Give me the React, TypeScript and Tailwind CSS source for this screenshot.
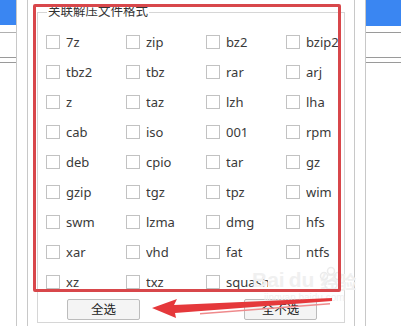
import React from "react";

const items = [
  "7z","zip","bz2","bzip2",
  "tbz2","tbz","rar","arj",
  "z","taz","lzh","lha",
  "cab","iso","001","rpm",
  "deb","cpio","tar","gz",
  "gzip","tgz","tpz","wim",
  "swm","lzma","dmg","hfs",
  "xar","vhd","fat","ntfs",
  "xz","txz","squash",
];

const font = { fontFamily: '"Noto Sans", "Noto Sans CJK SC", sans-serif' };

export default function App() {
  return (
    <div className="relative w-[401px] h-[326px] overflow-hidden bg-white flex" style={font}>
      {/* left strip */}
      <div className="w-[28px] h-full flex border-r border-[#c8c8c8]">
        <div className="w-[17px] h-full border-r border-[#c8c8c8] flex flex-col">
          <div className="h-[25px] bg-[#3a86f2]" />
          <div className="h-[7px]" />
          <div className="h-[25px] border-t border-[#b0b0b0]" />
          <div className="h-[5px] border-t border-[#9a9a9a]" />
          <div className="border-t border-[#9a9a9a]" />
        </div>
      </div>

      {/* main */}
      <div className="w-[326px] h-full pl-[9px] pt-[4px]">
        <fieldset className="w-[308px] h-[319px] border border-[#d6d6d6] flex flex-col">
          <legend className="ml-[9px] px-[1px] text-[12.5px] leading-[16px] text-[#333]" style={font}>
            关联解压文件格式
          </legend>
          <div className="pt-[7px] pl-[8px] grid grid-cols-[80px_80px_80px_58px]">
            {items.map((t) => (
              <div key={t} className="h-[30px] flex items-center">
                <span className="w-[14px] h-[14px] border border-[#c2c2c2] bg-white shrink-0" />
                <span className="ml-[6px] w-[42px] overflow-hidden whitespace-nowrap text-[13px] leading-[16px] text-[#3a3a3a]">
                  {t}
                </span>
              </div>
            ))}
          </div>
          <div className="mt-[2px] pl-[29px] flex gap-[104px]">
            <button className="w-[73px] h-[21px] border border-[#bcbcbc] rounded-[2px] bg-[#f4f4f4] text-[12.5px] leading-[19px] text-[#222]">
              全选
            </button>
            <button className="w-[73px] h-[21px] border border-[#bcbcbc] rounded-[2px] bg-[#f4f4f4] text-[12.5px] leading-[19px] text-[#222]">
              全不选
            </button>
          </div>
        </fieldset>
      </div>

      {/* right strip */}
      <div className="flex-1 h-full flex border-l border-[#c8c8c8]">
        <div className="w-[11px] h-full border-r border-[#c8c8c8]" />
        <div className="flex-1 flex flex-col">
          <div className="h-[26px] bg-[#3a86f2]" />
          <div className="h-[6px]" />
          <div className="h-[25px] border-t border-[#9a9a9a]" />
          <div className="h-[5px] border-t border-[#9a9a9a]" />
          <div className="border-t border-[#9a9a9a]" />
        </div>
      </div>

      {/* watermark */}
      <div className="absolute left-[252px] top-[268px] pointer-events-none select-none">
        <div className="flex items-end gap-[4px]">
          <span className="text-[21px] font-bold leading-[24px] text-[#f0f0f0]" style={{ fontFamily: '"Liberation Sans", sans-serif' }}>
            Bai
          </span>
          <span className="text-[21px] font-bold leading-[24px] text-[#f0f0f0]" style={{ fontFamily: '"Liberation Sans", sans-serif' }}>
            du
          </span>
          <span className="ml-[2px] text-[18px] font-bold leading-[22px] text-[#f0f0f0]" style={{ fontFamily: '"Noto Sans CJK SC", sans-serif' }}>
            经验
          </span>
        </div>
        <div className="ml-[12px] text-[10px] leading-[12px] text-[#f0f0f0]" style={{ fontFamily: '"Liberation Sans", sans-serif' }}>
          jingyan.baidu.com
        </div>
      </div>
      <svg className="absolute left-0 top-0 pointer-events-none" width="401" height="326" viewBox="0 0 401 326">
        <g fill="none" stroke="#ececec" strokeWidth="1.5">
          <circle cx="324" cy="276" r="3.5" />
          <circle cx="331" cy="271" r="3.5" />
          <circle cx="338" cy="276" r="3.5" />
          <ellipse cx="331" cy="285" rx="6" ry="4.5" />
        </g>
      </svg>

      {/* red annotation box */}
      <div className="absolute left-[33px] top-[4px] w-[308px] h-[288px] border-[3px] border-[#d8474b] rounded-[2px] pointer-events-none" />

      {/* red arrow */}
      <svg className="absolute left-0 top-0 pointer-events-none" width="401" height="326" viewBox="0 0 401 326">
        <polygon points="152,308 177,299 174,305 332,298 332,301 175,313 176,318" fill="#e5383b" />
        <polygon points="200,313 330,303 330,304.5 200,314.5" fill="#ef8a8c" />
      </svg>
    </div>
  );
}
